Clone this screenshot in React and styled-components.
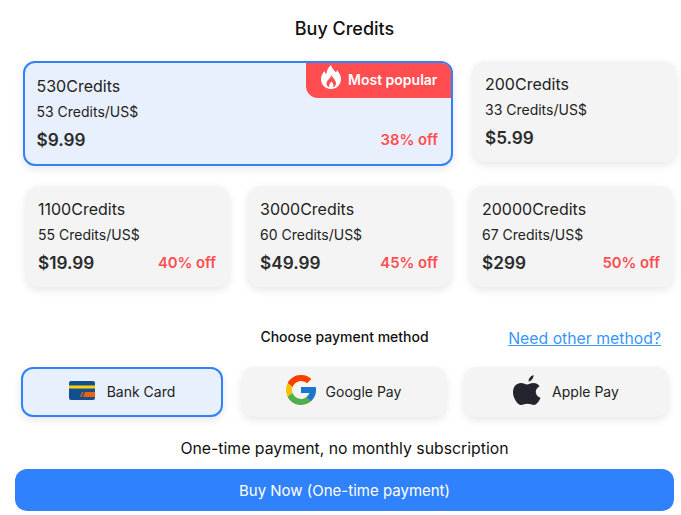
import styled, { createGlobalStyle } from "styled-components";
import { FcGoogle } from "react-icons/fc";

const GlobalStyle = createGlobalStyle`
  html, body {
    margin: 0;
    padding: 0;
    background: #fff;
  }
  body {
    font-family: Inter, "Noto Sans", "Liberation Sans", sans-serif;
    color: #111;
  }
`;

const Page = styled.div`
  width: 681px;
  height: 515px;
  box-sizing: border-box;
  padding: 19px 7px 0 15px;
  overflow: hidden;
`;

const Title = styled.h1`
  margin: 0 0 22px;
  height: 20px;
  line-height: 20px;
  font-size: 18px;
  font-weight: 500;
  text-align: center;
`;

const TopRow = styled.div`
  display: grid;
  grid-template-columns: 430px 203px;
  column-gap: 20px;
  align-items: start;
  margin: 0 -2px 0 8px;
  height: 125px;
`;

const Row = styled.div`
  display: grid;
  grid-template-columns: repeat(3, 203px);
  column-gap: 19px;
  margin-left: 11px;
`;

const Card = styled.div`
  position: relative;
  box-sizing: border-box;
  height: ${(props) => (props.$selected ? "105px" : "101px")};
  padding: ${(props) => (props.$selected ? "12px 12px 0 11.5px" : "12px 12px 0")};
  border-radius: 12px;
  border: ${(props) => (props.$selected ? "2px solid #2f82fb" : "none")};
  background: ${(props) => (props.$selected ? "#e9f0fd" : "#f4f4f4")};
  box-shadow: 0 3px 8px rgba(0, 0, 0, 0.1);
`;

const Badge = styled.div`
  position: absolute;
  top: 0;
  right: 0;
  width: 145px;
  height: 35px;
  box-sizing: border-box;
  padding: 0 0 2px 15px;
  display: flex;
  align-items: center;
  gap: 7px;
  background: #ff4d50;
  color: #fff;
  font-size: 14px;
  font-weight: 600;
  border-radius: 0 9px 0 12px;
  svg {
    margin-top: -6px;
  }
`;

const CreditName = styled.div`
  height: 22px;
  line-height: 22px;
  font-size: 16px;
  font-weight: 400;
  color: #222;
`;

const CreditRate = styled.div`
  margin-top: 5px;
  height: 20px;
  line-height: 20px;
  font-size: 14px;
  color: #222;
`;

const PriceLine = styled.div`
  margin-top: 4px;
  display: flex;
  align-items: center;
  justify-content: space-between;
  height: 26px;
  padding-right: 1px;
`;

const Price = styled.span`
  font-size: 17.2px;
  font-weight: 600;
  color: #2b2b2b;
`;

const Off = styled.span`
  margin-top: 2px;
  font-size: 14.8px;
  font-weight: 600;
  color: #ff4d50;
`;

const MethodHeader = styled.div`
  position: relative;
  margin-top: 38px;
  height: 24px;
  line-height: 24px;
  text-align: center;
  font-size: 14px;
  font-weight: 500;
`;

const OtherLink = styled.a`
  position: absolute;
  right: 13px;
  top: 2px;
  font-size: 15.8px;
  font-weight: 400;
  color: #3b95fb;
  text-decoration: underline;
`;

const Methods = styled.div`
  display: grid;
  grid-template-columns: 202px 204px 204px;
  column-gap: 18.5px;
  margin: 18px 0 0 6px;
`;

const Method = styled.div`
  box-sizing: border-box;
  height: 50px;
  padding-bottom: 2px;
  display: flex;
  align-items: center;
  justify-content: center;
  gap: ${(props) => props.$gap || "10px"};
  border-radius: 12px;
  border: ${(props) => (props.$selected ? "2px solid #2f82fb" : "none")};
  background: ${(props) => (props.$selected ? "#e9f0fd" : "#f4f4f4")};
  box-shadow: 0 3px 8px rgba(0, 0, 0, 0.1);
  font-size: 14px;
  color: #222;
`;

const MethodIcon = styled.span`
  display: flex;
  margin-top: -2px;
`;

const GoogleMark = styled(FcGoogle)`
  margin: -3px;
`;

const Note = styled.div`
  margin-top: 21px;
  height: 22px;
  line-height: 22px;
  text-align: center;
  font-size: 15.8px;
  color: #111;
`;

const BuyButton = styled.button`
  display: block;
  width: 100%;
  height: 42px;
  margin-top: 9px;
  border: none;
  border-radius: 12px;
  background: #2f82fb;
  color: #fff;
  font-family: inherit;
  font-size: 15px;
  cursor: pointer;
`;

const FlameIcon = () => (
  <svg width="20" height="24" viewBox="0 0 20 24">
    <path
      fill="#fff"
      fillRule="evenodd"
      d="M10 0C10.5 3 13 5 15 7.5C15.5 6.5 15.8 6 16 5C18.5 8 20 11 20 14C20 20 15.5 24 10 24C4.5 24 0 20 0 14C0 11 1.5 8 3.5 6C4 7.5 4.5 8.5 5.5 9C5.5 6 7 2.5 10 0ZM10.5 10C10.5 12.5 5.5 15 5.5 18.5C5.5 20.5 7 22 8.5 22.3C7.5 20.5 8.5 18.5 10.5 16.5C12.5 18.5 12.8 20.5 12 22.3C13.5 22 15 20.5 15 18C15 15 11.5 13 10.5 10Z"
    />
  </svg>
);

const BankIcon = () => (
  <svg width="26" height="19" viewBox="0 0 26 19">
    <rect width="26" height="19" rx="2" fill="#11508f" />
    <rect y="4.5" width="26" height="3" fill="#fdd20a" />
    <path d="M16 11h10v5H14z" fill="#ee5f14" />
    <path d="M13 11h1.5l-2 5H11z" fill="#ee5f14" />
  </svg>
);

const AppleIcon = () => (
  <svg width="28" height="30" viewBox="0 0 28 30">
    <path
      fill="#24242f"
      d="M15.5 6.5C15.5 3.5 17.5 1 20.5 0C20.8 3 18.5 6 15.5 6.5ZM8 8C10.5 8 12.5 9.5 14 9.5C15.5 9.5 17.5 8 20.5 8C23 8 25.2 9.2 26.5 11.2C23.5 13 22.6 15.2 22.8 17.2C23 19.8 24.8 21.8 27.5 22.8C26.3 26 23.5 30 21 30C19 30 17 28.8 14.5 28.8C12 28.8 10 30 8 30C5 30 0 23.5 0 17.5C0 11.5 3.5 8 8 8Z"
    />
  </svg>
);

const CreditCard = ({ name, rate, price, off, selected, children }) => (
  <Card $selected={selected}>
    {children}
    <CreditName>{name}</CreditName>
    <CreditRate>{rate}</CreditRate>
    <PriceLine>
      <Price>{price}</Price>
      {off && <Off>{off}</Off>}
    </PriceLine>
  </Card>
);

export default function App() {
  return (
    <Page>
      <GlobalStyle />
      <Title>Buy Credits</Title>
      <TopRow>
        <CreditCard name="530Credits" rate="53 Credits/US$" price="$9.99" off="38% off" selected>
          <Badge>
            <FlameIcon />
            Most popular
          </Badge>
        </CreditCard>
        <CreditCard name="200Credits" rate="33 Credits/US$" price="$5.99" />
      </TopRow>
      <Row>
        <CreditCard name="1100Credits" rate="55 Credits/US$" price="$19.99" off="40% off" />
        <CreditCard name="3000Credits" rate="60 Credits/US$" price="$49.99" off="45% off" />
        <CreditCard name="20000Credits" rate="67 Credits/US$" price="$299" off="50% off" />
      </Row>
      <MethodHeader>
        Choose payment method
        <OtherLink>Need other method?</OtherLink>
      </MethodHeader>
      <Methods>
        <Method $selected $gap="12px">
          <MethodIcon>
            <BankIcon />
          </MethodIcon>
          Bank Card
        </Method>
        <Method>
          <MethodIcon>
            <GoogleMark size={36} />
          </MethodIcon>
          Google Pay
        </Method>
        <Method $gap="11px">
          <MethodIcon>
            <AppleIcon />
          </MethodIcon>
          Apple Pay
        </Method>
      </Methods>
      <Note>One-time payment, no monthly subscription</Note>
      <BuyButton>Buy Now (One-time payment)</BuyButton>
    </Page>
  );
}
